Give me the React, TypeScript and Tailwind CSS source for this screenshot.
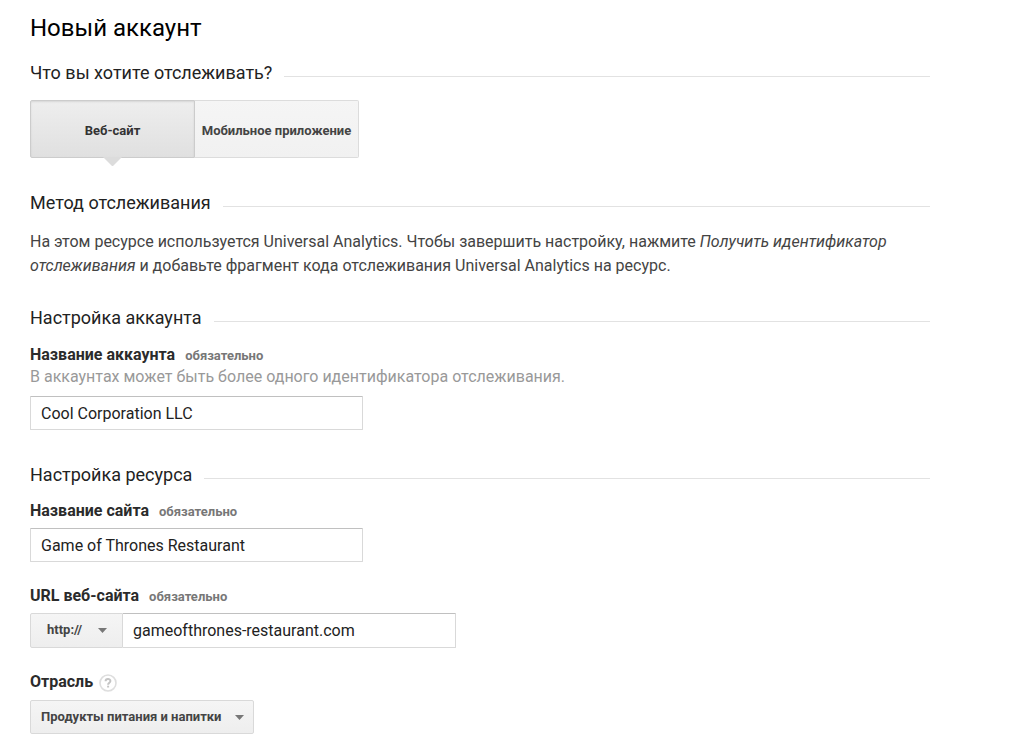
import { useState, type ReactNode } from 'react';

const inputClass =
  'w-full max-w-[333px] border border-[#d9d9d9] border-t-[#c0c0c0] bg-white px-[10px] text-base text-[#222] outline-none focus:border-[#4d90fe]';

const selectClass =
  'h-full w-full appearance-none border border-[#d9d9d9] bg-linear-to-b from-[#f5f5f5] to-[#eee] pb-px text-[13px] font-bold text-[#444] outline-none focus:border-[#4d90fe]';

function SectionHeading({ children }: { children: ReactNode }) {
  return (
    <div className="flex items-center gap-3">
      <h2 className="text-lg leading-6 text-[#222]">{children}</h2>
      <div className="mt-[7px] h-px flex-1 bg-[#e2e2e2]" />
    </div>
  );
}

function FieldLabel({ htmlFor, children }: { htmlFor: string; children: ReactNode }) {
  return (
    <div className="flex items-baseline gap-[10px] leading-5">
      <label htmlFor={htmlFor} className="text-base leading-5 font-bold text-[#2b2b2b]">
        {children}
      </label>
      <span className="text-[13px] leading-5 font-bold text-[#777]">обязательно</span>
    </div>
  );
}

function Caret({ className }: { className: string }) {
  return (
    <svg
      viewBox="0 0 9 5"
      className={`pointer-events-none absolute top-[15px] h-[5px] w-[9px] ${className}`}
      aria-hidden="true"
    >
      <path d="M0 0h9L4.500 5z" fill="#777" />
    </svg>
  );
}

const tabs = [
  { id: 'web', title: 'Веб-сайт' },
  { id: 'app', title: 'Мобильное приложение' },
];

export default function App() {
  const [active, setActive] = useState('web');

  return (
    <main className="max-w-[960px] bg-white px-[30px] pt-3 pb-[5px] font-['Roboto',sans-serif] text-[#444]">
      <h1 className="text-2xl leading-8 text-black">Новый аккаунт</h1>

      <section className="mt-[17px]">
        <SectionHeading>Что вы хотите отслеживать?</SectionHeading>
        <div className="mt-[15px] grid max-w-[329px] grid-cols-[165px_164px]">
          {tabs.map((tab) => (
            <button
              key={tab.id}
              type="button"
              aria-pressed={active === tab.id}
              onClick={() => setActive(tab.id)}
              className={
                active === tab.id
                  ? 'relative h-[58px] border border-[#ccc] bg-linear-to-b from-[#eee] to-[#e0e0e0] pt-1 text-[13px] font-bold whitespace-nowrap text-[#333] shadow-[inset_0_1px_2px_rgba(0,0,0,0.1)] first:rounded-l-xs last:rounded-r-xs'
                  : 'relative h-[58px] border border-[#dcdcdc] bg-linear-to-b from-[#f5f5f5] to-[#f1f1f1] pt-1 text-[13px] font-bold whitespace-nowrap text-[#444] first:rounded-l-xs first:border-r-0 last:rounded-r-xs last:border-l-0'
              }
            >
              {tab.title}
              {active === tab.id && (
                <span className="absolute inset-x-0 top-full flex justify-center">
                  <svg viewBox="0 0 19 9" className="h-[9px] w-[19px]" aria-hidden="true">
                    <path d="M0 0h19L9.500 9.500z" fill="#dcdcdc" />
                  </svg>
                </span>
              )}
            </button>
          ))}
        </div>
      </section>

      <section className="mt-[33px]">
        <SectionHeading>Метод отслеживания</SectionHeading>
        <p className="mt-[15px] text-base leading-6">
          На этом ресурсе используется Universal Analytics. Чтобы завершить настройку, нажмите{' '}
          <em>Получить идентификатор отслеживания</em> и добавьте фрагмент кода отслеживания
          Universal Analytics на ресурс.
        </p>
      </section>

      <section className="mt-7">
        <SectionHeading>Настройка аккаунта</SectionHeading>
        <div className="mt-[15px]">
          <FieldLabel htmlFor="account">Название аккаунта</FieldLabel>
          <p className="mt-px mb-[9px] text-base leading-5 text-[#999]">
            В аккаунтах может быть более одного идентификатора отслеживания.
          </p>
          <input
            id="account"
            type="text"
            defaultValue="Cool Corporation LLC"
            className={`${inputClass} block h-[34px] rounded-[1px]`}
          />
        </div>
      </section>

      <section className="mt-[33px]">
        <SectionHeading>Настройка ресурса</SectionHeading>
        <div className="mt-[14px] flex flex-col gap-6">
          <div className="flex flex-col gap-1.5">
            <FieldLabel htmlFor="site">Название сайта</FieldLabel>
            <input
              id="site"
              type="text"
              defaultValue="Game of Thrones Restaurant"
              className={`${inputClass} h-[34px] rounded-[1px]`}
            />
          </div>

          <div className="flex flex-col gap-1.5">
            <FieldLabel htmlFor="url">URL веб-сайта</FieldLabel>
            <div className="flex h-[35px]">
              <div className="relative w-[93px] shrink-0">
                <select
                  aria-label="Протокол"
                  defaultValue="http://"
                  className={`${selectClass} rounded-l-xs pl-4`}
                >
                  <option>http://</option>
                  <option>https://</option>
                </select>
                <Caret className="right-4" />
              </div>
              <input
                id="url"
                type="text"
                defaultValue="gameofthrones-restaurant.com"
                className={`${inputClass} rounded-r-[1px] border-l-0`}
              />
            </div>
          </div>

          <div className="flex flex-col gap-2">
            <div className="flex items-center gap-1.5">
              <label htmlFor="industry" className="text-base leading-5 font-bold text-[#2b2b2b]">
                Отрасль
              </label>
              <button type="button" aria-label="Справка" className="-my-1 pt-0.5">
                <svg viewBox="0 0 18 18" className="size-[18px]" aria-hidden="true">
                  <circle cx="9" cy="9" r="8" fill="#fff" stroke="#dedede" strokeWidth="1.600" />
                  <path
                    d="M6.600 7.300c0-2.900 4.800-2.900 4.800-.3 0 1.700-2.300 1.700-2.300 3.700"
                    fill="none"
                    stroke="#c4c4c4"
                    strokeWidth="2"
                  />
                  <path d="M8.100 11.700h2v1.800h-2z" fill="#c4c4c4" />
                </svg>
              </button>
            </div>
            <div className="relative h-[34px] w-56">
              <select
                id="industry"
                defaultValue="food"
                className={`${selectClass} rounded-xs pl-[10px]`}
              >
                <option value="food">Продукты питания и напитки</option>
                <option value="travel">Путешествия</option>
                <option value="shopping">Покупки</option>
              </select>
              <Caret className="right-[10px]" />
            </div>
          </div>
        </div>
      </section>
    </main>
  );
}
